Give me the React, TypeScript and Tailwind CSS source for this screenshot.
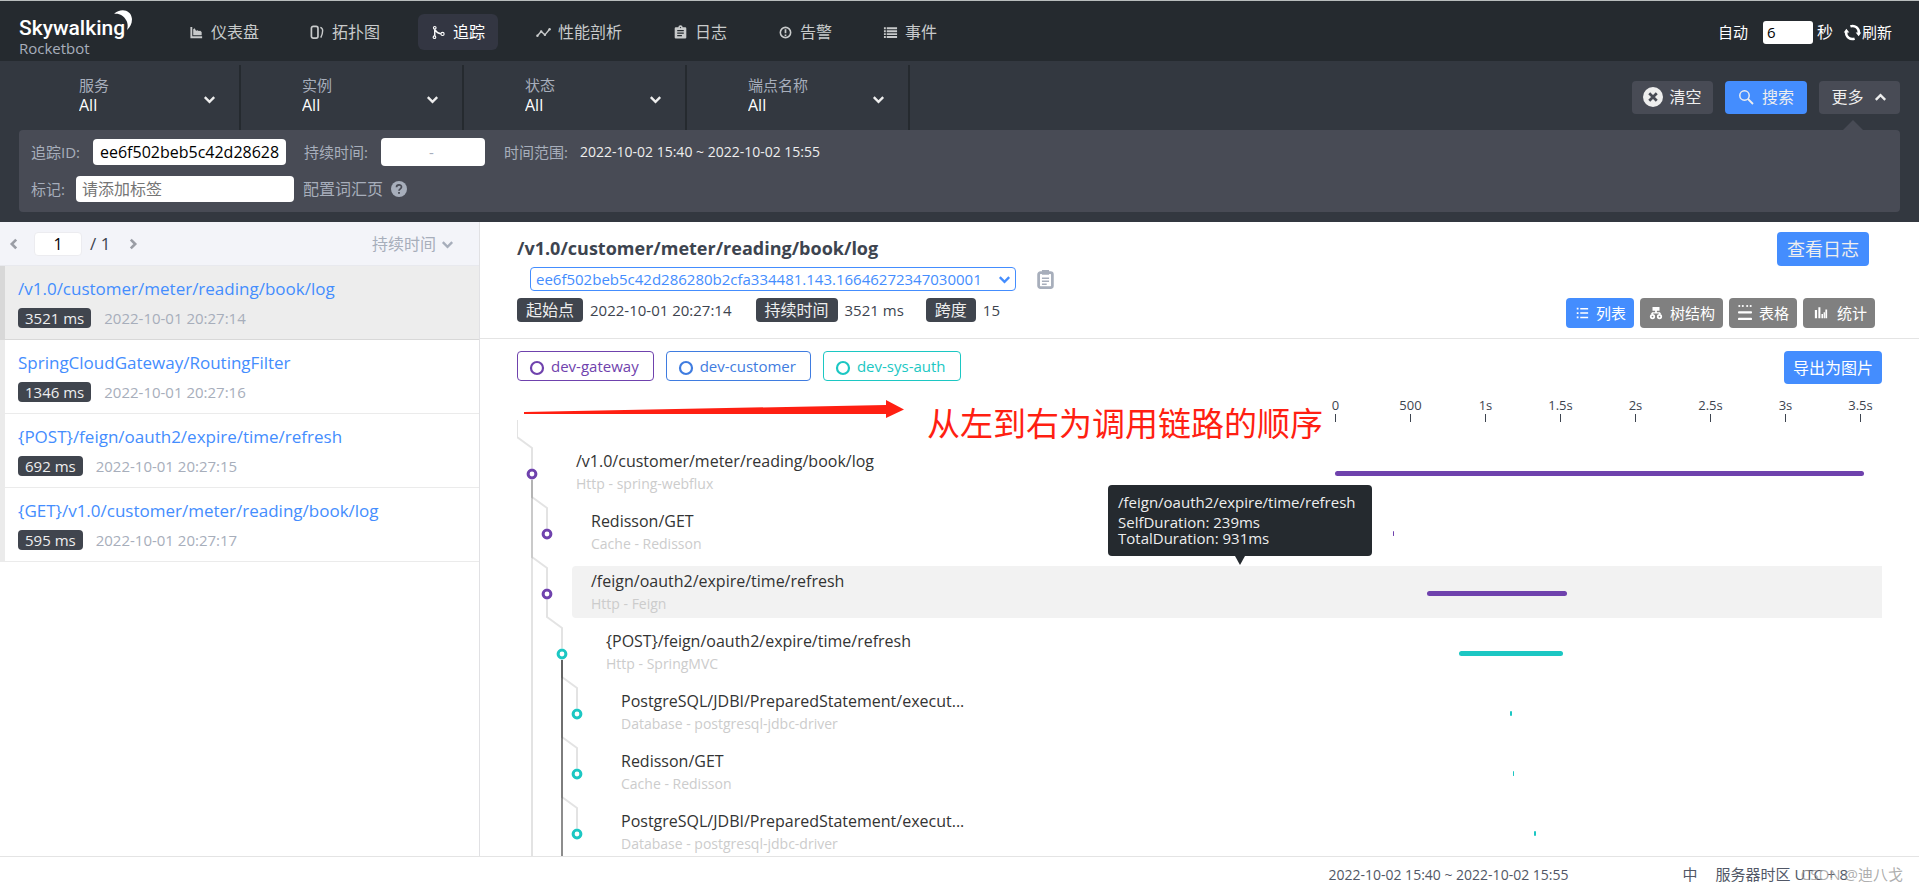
import React from "react";

type Span = {
  id: number;
  parent: number;
  depth: number;
  title: string;
  component: string;
  service: string;
  start: number;
  duration: number;
};

const TRACE_ID = "ee6f502beb5c42d286280b2cfa334481.143.16646272347030001";

// time covered by the full width of the bar track, in ms
const TRACK_MS = 3640;
const ROW_HEIGHT = 60;

const navItems = [
  { label: "仪表盘", icon: "dashboard" },
  { label: "拓扑图", icon: "topology" },
  { label: "追踪", icon: "trace", active: true },
  { label: "性能剖析", icon: "profile" },
  { label: "日志", icon: "log" },
  { label: "告警", icon: "alarm" },
  { label: "事件", icon: "event" },
];

const filters = ["服务", "实例", "状态", "端点名称"];

const traces = [
  { title: "/v1.0/customer/meter/reading/book/log", ms: 3521, time: "2022-10-01 20:27:14" },
  { title: "SpringCloudGateway/RoutingFilter", ms: 1346, time: "2022-10-01 20:27:16" },
  { title: "{POST}/feign/oauth2/expire/time/refresh", ms: 692, time: "2022-10-01 20:27:15" },
  { title: "{GET}/v1.0/customer/meter/reading/book/log", ms: 595, time: "2022-10-01 20:27:17" },
];

const services = [
  { name: "dev-gateway", className: "border-[#6f42ad] text-[#6f42ad]" },
  { name: "dev-customer", className: "border-[#3f7ce0] text-[#3f7ce0]" },
  { name: "dev-sys-auth", className: "border-[#1cc7c3] text-[#1cc7c3]" },
];

const views = [
  { label: "列表", icon: "list", iconWidth: "w-4", active: true },
  { label: "树结构", icon: "tree", iconWidth: "w-4" },
  { label: "表格", icon: "table", iconWidth: "w-4" },
  { label: "统计", icon: "statistics", iconWidth: "w-5" },
];

const ticks = ["0", "500", "1s", "1.5s", "2s", "2.5s", "3s", "3.5s"];

const colors: Record<string, string> = {
  gateway: "#6f42ad",
  auth: "#1cc7c3",
};

const spans: Span[] = [
  { id: 0, parent: -1, depth: 1, title: "/v1.0/customer/meter/reading/book/log", component: "Http - spring-webflux", service: "gateway", start: 0, duration: 3521 },
  { id: 1, parent: 0, depth: 2, title: "Redisson/GET", component: "Cache - Redisson", service: "gateway", start: 388, duration: 8 },
  { id: 2, parent: 0, depth: 2, title: "/feign/oauth2/expire/time/refresh", component: "Http - Feign", service: "gateway", start: 612, duration: 931 },
  { id: 3, parent: 2, depth: 3, title: "{POST}/feign/oauth2/expire/time/refresh", component: "Http - SpringMVC", service: "auth", start: 828, duration: 692 },
  { id: 4, parent: 3, depth: 4, title: "PostgreSQL/JDBI/PreparedStatement/execut...", component: "Database - postgresql-jdbc-driver", service: "auth", start: 1166, duration: 12 },
  { id: 5, parent: 3, depth: 4, title: "Redisson/GET", component: "Cache - Redisson", service: "auth", start: 1182, duration: 10 },
  { id: 6, parent: 3, depth: 4, title: "PostgreSQL/JDBI/PreparedStatement/execut...", component: "Database - postgresql-jdbc-driver", service: "auth", start: 1326, duration: 12 },
];

const Icon = ({ name, className = "" }: { name: string; className?: string }) => {
  const shapes: Record<string, React.ReactNode> = {
    dashboard: (
      <path d="M1.5 2h2v10H14v2H1.5zM4.5 4.5l1.5-1 1.5 2.5 1.5-.5 1.5 1 1.5-.5 1.5 1.5V11h-9z" fill="currentColor" />
    ),
    topology: (
      <g fill="none" stroke="currentColor" strokeWidth="1.8">
        <rect x="1.500" y="1.500" width="7" height="12.500" rx="2" />
        <path d="M11 2.500c1.800.6 2.500 1.500 2.500 3.300 0 3-.7 5.200-2 7.700" strokeWidth="1.500" />
      </g>
    ),
    trace: (
      <g fill="none" stroke="currentColor" strokeWidth="1.200">
        <path d="M4 4.500v7M4.500 5.500c1.500 2.500 3.500 3.500 6 3.800" strokeWidth="1.500" />
        <circle cx="4" cy="3" r="1.400" />
        <circle cx="3.700" cy="13" r="1.400" />
        <circle cx="12.300" cy="9.500" r="1.700" />
      </g>
    ),
    profile: (
      <g fill="none" stroke="currentColor" strokeWidth="1.500">
        <path d="M1.500 11.500l4-4.500 4 3.500 5-6" />
        <g fill="currentColor" stroke="none">
          <circle cx="1.500" cy="11.500" r="1.300" />
          <circle cx="5.500" cy="7" r="1.300" />
          <circle cx="9.500" cy="10.500" r="1.300" />
          <circle cx="14.500" cy="4.500" r="1.300" />
        </g>
      </g>
    ),
    log: (
      <path
        fill="currentColor"
        fillRule="evenodd"
        d="M13 2.500h-2.700a2.200 2.200 0 0 0-4.600 0H3A1.200 1.200 0 0 0 1.800 3.700v9.600A1.200 1.200 0 0 0 3 14.500h10a1.200 1.200 0 0 0 1.200-1.200V3.700A1.200 1.200 0 0 0 13 2.500zM8 2a.7.7 0 1 1 0 1.400A.7.7 0 0 1 8 2zm1.500 10h-5v-1.300h5zm2-2.700h-7V8h7zm0-2.600h-7V5.300h7z"
      />
    ),
    alarm: (
      <g>
        <circle cx="8" cy="8" r="5.500" fill="none" stroke="currentColor" strokeWidth="1.700" />
        <path d="M7.100 4.500h1.800v4.300H7.100zM7.100 10h1.800v1.600H7.100z" fill="currentColor" />
      </g>
    ),
    event: (
      <path
        fill="currentColor"
        d="M1 2.500h2v2H1zM4 2.500h11v2H4zM1 5.600h2v2H1zM4 5.600h11v2H4zM1 8.700h2v2H1zM4 8.700h11v2H4zM1 11.800h2v2H1zM4 11.800h11v2H4z"
      />
    ),
    list: (
      <path
        fill="currentColor"
        d="M2 2h2v2H2zM6 2.200h9v1.700H6zM2 7h2v2H2zM6 7.200h9v1.700H6zM2 12h2v2H2zM6 12.200h9v1.700H6z"
      />
    ),
    tree: (
      <g>
        <path d="M4 1h8v4.500H9V7h3.500L14 9.500h-2l-1-1H5l-1 1H2L3.500 7H7V5.500H4z" fill="currentColor" />
        <g fill="none" stroke="currentColor" strokeWidth="2">
          <circle cx="4" cy="12" r="2" />
          <circle cx="12" cy="12" r="2" />
        </g>
      </g>
    ),
    table: (
      <g fill="currentColor">
        <circle cx="1.500" cy="0" r="1.200" />
        <circle cx="5.500" cy="0" r="1.200" />
        <circle cx="10.500" cy="0" r="1.200" />
        <circle cx="14.500" cy="0" r="1.200" />
        <rect x="0" y="6" width="16" height="2.500" rx="1" />
        <rect x="0" y="13.500" width="16" height="2.500" rx="1" />
      </g>
    ),
    statistics: (
      <path fill="currentColor" d="M1 4.500h2.500V14H1zM5 1.500h2.300V14H5zM8.500 9h1.800v5H8.500zM11 7h1.500v7H11zM13 4h2v10h-2z" />
    ),
    clipboard: (
      <g fill="none" stroke="currentColor">
        <rect x="2.200" y="2.200" width="11.600" height="12.600" rx="1.500" strokeWidth="2.300" />
        <path d="M5 2h6" strokeWidth="4" />
        <path d="M5 7h6M5 9.500h6M5 12h4" strokeWidth="1.200" />
      </g>
    ),
    clear: (
      <g>
        <circle cx="8" cy="8" r="8" fill="currentColor" />
        <path d="M5 5l6 6M11 5l-6 6" stroke="#484b55" strokeWidth="2.200" />
      </g>
    ),
    search: (
      <g fill="none" stroke="currentColor" strokeWidth="1.500">
        <circle cx="6.500" cy="6.500" r="4.700" />
        <path d="M10 10l5 5" strokeWidth="1.800" />
      </g>
    ),
    refresh: (
      <g fill="none" stroke="currentColor" strokeWidth="2.300">
        <path d="M6 2.200A6 6 0 0 1 14 8.500M10 13.800A6 6 0 0 1 2 7.500" />
        <path d="M11 8h5.200L13.800 11.500zM-.2 8h5.200L2.200 4.500z" fill="currentColor" stroke="none" />
      </g>
    ),
    help: (
      <g>
        <circle cx="8" cy="8" r="8" fill="currentColor" />
        <path d="M5.500 6.200C5.500 3 10.500 3 10.500 6.100 10.500 7.900 8 7.900 8 9.800" fill="none" stroke="#484b55" strokeWidth="1.700" />
        <rect x="7.100" y="11" width="1.800" height="1.800" fill="#484b55" />
      </g>
    ),
    down: <path d="M3 5.500l5 5 5-5" fill="none" stroke="currentColor" strokeWidth="2.500" />,
    up: <path d="M3 10.500l5-5 5 5" fill="none" stroke="currentColor" strokeWidth="2.500" />,
    left: <path d="M10.500 3l-5 5 5 5" fill="none" stroke="currentColor" strokeWidth="3" />,
    right: <path d="M5.500 3l5 5-5 5" fill="none" stroke="currentColor" strokeWidth="3" />,
  };
  return (
    <svg viewBox="0 0 16 16" className={`shrink-0 overflow-visible ${className}`} aria-hidden="true">
      {shapes[name]}
    </svg>
  );
};

const Header = () => (
  <header className="flex h-[61px] shrink-0 items-center border-t border-[#b9bdbd] bg-[#252a2f] pl-[19px] pr-[27px] pt-0.5">
    <div className="relative w-[157px] pt-2">
      <div className="font-['Roboto',sans-serif] text-[21px] font-medium leading-6 text-white">Skywalking</div>
      <div className="text-[15px] leading-4 text-[#a7aebb]">Rocketbot</div>
      <svg viewBox="0 0 18 20" className="absolute left-[95px] top-0.5 h-5 w-[18px]" aria-hidden="true">
        <path d="M0 4C6-2 17-1 18 9c0 5-2 8-5 11 1-3 1-7-1-10C10 6 5 3 0 4z" fill="#fff" />
      </svg>
    </div>
    <nav className="flex gap-[25px]">
      {navItems.map((item) => (
        <a
          key={item.label}
          href="#"
          className={`flex h-9 items-center gap-[7px] rounded-md px-[13px] text-base ${
            item.active ? "bg-[#333642] text-white" : "text-[#c8cacb]"
          }`}
        >
          <Icon name={item.icon} className="h-[15px] w-[15px]" />
          {item.label}
        </a>
      ))}
    </nav>
    <div className="ml-auto flex items-center text-[15px] text-white">
      <label htmlFor="interval" className="mr-[15px]">自动</label>
      <input
        id="interval"
        defaultValue="6"
        className="mr-1 h-[23px] w-[50px] rounded-[3px] bg-white px-1 text-[15px] text-black"
      />
      <span className="mr-[11px] text-base">秒</span>
      <button className="flex items-center gap-px">
        <Icon name="refresh" className="h-[17px] w-[17px]" />
        刷新
      </button>
    </div>
  </header>
);

const FilterBar = () => (
  <section className="shrink-0 bg-[#333840] px-[19px] pb-[10px] pt-1">
    <div className="flex h-[65px] items-center">
      <div className="-ml-px flex self-stretch">
        {filters.map((label) => (
          <div key={label} className="relative flex w-[223px] flex-col justify-center border-r-2 border-[#252a2f] pb-[5px] pl-[61px]">
            <label htmlFor={label} className="text-[15px] leading-5 text-[#a7aebb]">{label}</label>
            <select id={label} className="w-[148px] appearance-none bg-transparent text-base leading-5 text-white">
              <option>All</option>
            </select>
            <Icon name="down" className="pointer-events-none absolute right-[22px] top-[27px] h-[15px] w-[15px] text-[#eee]" />
          </div>
        ))}
      </div>
      <div className="ml-auto flex gap-3 pb-px text-base text-[#eee]">
        <button className="flex h-[33px] w-[81px] items-center justify-center gap-1.5 rounded bg-[#484b55]">
          <Icon name="clear" className="h-5 w-5" />
          清空
        </button>
        <button className="flex h-[33px] w-[82px] items-center justify-center gap-2 rounded bg-[#448dfe]">
          <Icon name="search" className="h-4 w-4" />
          搜索
        </button>
        <button className="flex h-[33px] w-[81px] items-center justify-center gap-[9px] rounded bg-[#484b55]">
          更多
          <Icon name="up" className="h-[15px] w-[15px]" />
        </button>
      </div>
    </div>
    <div className="relative flex h-[82px] flex-col gap-[10px] rounded bg-[#484b55] px-3 pt-2 text-[15px] text-[#a7aebb]">
      <svg viewBox="0 0 20 10" className="absolute -top-[10px] right-[37px] h-[10px] w-5" aria-hidden="true">
        <path d="M0 10L10 0l10 10z" fill="#484b55" />
      </svg>
      <div className="flex h-7 items-center">
        <label htmlFor="trace-id" className="w-[62px]">追踪ID:</label>
        <input
          id="trace-id"
          defaultValue={TRACE_ID}
          className="mr-[18px] h-[26px] w-[193px] rounded bg-white px-[7px] text-base text-black"
        />
        <label htmlFor="min-duration" className="w-[77px]">持续时间:</label>
        <div className="mr-[19px] flex h-7 w-[104px] items-center rounded bg-white">
          <input id="min-duration" className="w-12 min-w-0 bg-transparent text-center text-black" />
          <span>-</span>
          <input aria-label="最大持续时间" className="w-12 min-w-0 bg-transparent text-center text-black" />
        </div>
        <span className="w-[76px]">时间范围:</span>
        <span className="text-sm text-[#eee]">2022-10-02 15:40 ~ 2022-10-02 15:55</span>
      </div>
      <div className="flex h-[26px] items-center">
        <label htmlFor="tags" className="w-[45px]">标记:</label>
        <input
          id="tags"
          placeholder="请添加标签"
          className="mr-[9px] h-[26px] w-[218px] rounded bg-white px-1.5 text-base text-black placeholder:text-[#757575]"
        />
        <a href="#" className="flex items-center gap-2 text-base">
          配置词汇页
          <Icon name="help" className="h-4 w-4" />
        </a>
      </div>
    </div>
  </section>
);

const TraceList = () => (
  <aside className="flex w-[480px] shrink-0 flex-col border-r border-[#e1e1e4]">
    <div className="flex h-11 shrink-0 items-center border-b border-[#e8e9ee] bg-[#f3f4f9] pl-[7px] pr-6 text-base text-[#3d444f]">
      <button aria-label="上一页">
        <Icon name="left" className="h-3.5 w-3.5 text-[#9a9da5]" />
      </button>
      <input
        aria-label="页码"
        defaultValue="1"
        className="ml-[13px] mr-2 h-6 w-12 rounded border border-[#ececf0] bg-white text-center text-black"
      />
      <span className="text-[17px]">/ 1</span>
      <button aria-label="下一页" className="ml-4">
        <Icon name="right" className="h-3.5 w-3.5 text-[#9a9da5]" />
      </button>
      <div className="relative ml-auto text-[#a7aebb]">
        <select aria-label="排序" className="w-[83px] appearance-none bg-transparent">
          <option>持续时间</option>
        </select>
        <Icon name="down" className="pointer-events-none absolute right-0 top-[5px] h-[15px] w-[15px]" />
      </div>
    </div>
    <ul>
      {traces.map((trace, i) => (
        <li
          key={trace.title}
          className={`h-[74px] border-b border-l-[5px] pl-[13px] pt-[11px] ${
            i === 0 ? "border-b-[#d8d8d8] border-l-[#d8d8d8] bg-[#ededed]" : "border-b-[#ebebeb] border-l-[#ebebeb]"
          }`}
        >
          <a href="#" className="block text-[17px] leading-6 text-[#448dfe]">{trace.title}</a>
          <div className="mt-[7px] flex items-center gap-[13px] text-[15px] leading-5">
            <span className="rounded bg-[#40454e] px-[7px] text-[#eee]">{trace.ms} ms</span>
            <span className="text-[#a7aebb]">{trace.time}</span>
          </div>
        </li>
      ))}
    </ul>
  </aside>
);

const DetailHeader = () => (
  <div className="flex h-[117px] shrink-0 justify-between border-b border-[#e4e4e4] pl-[37px] pr-[44px] text-[#3d444f]">
    <div className="pt-[14px]">
      <h1 className="text-lg font-bold leading-6">/v1.0/customer/meter/reading/book/log</h1>
      <div className="ml-[13px] mt-[7px] flex items-center gap-5">
        <div className="relative text-[#448dfe]">
          <select aria-label="追踪ID" className="h-6 w-[486px] appearance-none rounded border border-[#448dfe] bg-transparent px-[5px] text-[15px] leading-5">
            <option>{TRACE_ID}</option>
          </select>
          <Icon name="down" className="pointer-events-none absolute right-1 top-[5px] h-[15px] w-[15px]" />
        </div>
        <button aria-label="复制" className="text-[#a7aebb]">
          <Icon name="clipboard" className="h-[19px] w-[19px]" />
        </button>
      </div>
      <dl className="mt-[7px] flex items-center text-[15px] leading-6">
        <dt className="rounded bg-[#40454e] px-[9px] text-base leading-6 text-[#eee]">起始点</dt>
        <dd className="ml-[7px] mr-6">2022-10-01 20:27:14</dd>
        <dt className="rounded bg-[#40454e] px-[9px] text-base leading-6 text-[#eee]">持续时间</dt>
        <dd className="ml-[7px] mr-[22px]">3521 ms</dd>
        <dt className="rounded bg-[#40454e] px-[9px] text-base leading-6 text-[#eee]">跨度</dt>
        <dd className="ml-[7px]">15</dd>
      </dl>
    </div>
    <div className="flex flex-col items-end pt-[10px]">
      <button className="mr-1.5 h-[34px] w-[92px] rounded bg-[#448dfe] text-lg leading-6 text-[#eee]">查看日志</button>
      <div className="mt-8 flex gap-1.5 text-[15px] text-white">
        {views.map((view) => (
          <button
            key={view.label}
            className={`flex h-[30px] items-center gap-1.5 rounded px-2 ${view.active ? "bg-[#448dfe]" : "bg-[#808080]"}`}
          >
            <Icon name={view.icon} className={`h-3.5 ${view.iconWidth}`} />
            {view.label}
          </button>
        ))}
      </div>
    </div>
  </div>
);

const nodeX = (depth: number) => depth * 15;
const nodeY = (index: number) => 54 + index * ROW_HEIGHT;

const linkPath = (parent: Span, childDepth: number, childIndex: number) =>
  `M${nodeX(parent.depth)} ${nodeY(parent.id) + 6}V${nodeY(childIndex) - 37}L${nodeX(childDepth)} ${
    nodeY(childIndex) - 26
  }V${nodeY(childIndex) - 6}`;

const SpanTree = () => {
  // spans further down the list, only their connectors reach into view
  const rest = [7, 8, 9, 10, 11];
  return (
    <svg className="absolute -top-[22px] left-0 h-[460px] w-20" aria-hidden="true">
      <g fill="none" stroke="#000" strokeOpacity="0.11" strokeWidth="2">
        <path d="M0 0V17L15 28V48" />
        {spans.slice(1).map((span) => (
          <path key={span.id} d={linkPath(spans[span.parent], span.depth, span.id)} />
        ))}
        {rest.map((index) => (
          <path key={index} d={linkPath(spans[3], 4, index)} />
        ))}
        <path d={linkPath(spans[0], 2, 12)} />
      </g>
      {spans.map((span) => (
        <circle
          key={span.id}
          cx={nodeX(span.depth)}
          cy={nodeY(span.id)}
          r="3.900"
          fill="#fff"
          stroke={colors[span.service]}
          strokeWidth="3"
        />
      ))}
    </svg>
  );
};

const Tooltip = () => (
  <div className="absolute bottom-[66px] left-[591px] z-10 w-[264px] rounded bg-[#252a2f] px-[10px] pb-[10px] pt-[7px] text-[15px] leading-4 text-[#eee]">
    <p className="mb-0.5 leading-5">/feign/oauth2/expire/time/refresh</p>
    <p>SelfDuration: 239ms</p>
    <p>TotalDuration: 931ms</p>
    <svg viewBox="0 0 10 9" className="absolute left-[127px] top-full h-[9px] w-[10px]" aria-hidden="true">
      <path d="M0 0h10L5 9z" fill="#252a2f" />
    </svg>
  </div>
);

const TraceChart = () => (
  <div className="relative min-h-0 flex-1 overflow-hidden px-[37px] pt-3">
    <div className="flex h-[33px] items-start gap-3">
      {services.map((service) => (
        <span
          key={service.name}
          className={`flex h-[30px] items-center gap-1.5 rounded border pl-[11px] pr-[14px] text-[15px] ${service.className}`}
        >
          <svg viewBox="0 0 16 16" className="mt-1 h-4 w-4" aria-hidden="true">
            <circle cx="8" cy="8" r="6" fill="none" stroke="currentColor" strokeWidth="2.200" />
          </svg>
          {service.name}
        </span>
      ))}
      <button className="ml-auto h-[33px] rounded bg-[#448dfe] px-[9px] text-base text-white">导出为图片</button>
    </div>

    <div className="mt-[13px] flex justify-end text-[13px] leading-4 text-[#3d444f]">
      <div className="-ml-[37px] mr-[-16px] flex">
        {ticks.map((tick) => (
          <div key={tick} className="flex w-[75px] flex-col items-center">
            {tick}
            <span className="mt-px h-2 w-px bg-[#3d444f]" />
          </div>
        ))}
      </div>
    </div>

    <div className="relative mt-5">
      <SpanTree />
      {spans.map((span, i) => (
        <div key={span.id} className="relative h-[60px] py-1 pl-[55px]">
          <div className={`flex h-[52px] items-center rounded-l ${i === 2 ? "bg-[#f2f2f2]" : ""}`}>
            <div className="min-w-0 flex-1 pl-1 pt-0.5">
              <div style={{ paddingLeft: (span.depth - 1) * 15 }}>
                <div className="text-base leading-[22px] text-[#333]">{span.title}</div>
                <div className="text-sm leading-6 text-[#ccc]">{span.component}</div>
              </div>
            </div>
            <div className="w-[547px] shrink-0">
              <div
                className="mt-[3px] h-[5px] min-w-px rounded-sm"
                style={{
                  marginLeft: `${(span.start / TRACK_MS) * 100}%`,
                  width: `${(span.duration / TRACK_MS) * 100}%`,
                  backgroundColor: colors[span.service],
                }}
              />
            </div>
          </div>
          {i === 2 && <Tooltip />}
        </div>
      ))}
    </div>

    <svg viewBox="0 0 380 18" className="absolute left-11 top-[61px] h-[18px] w-[380px]" aria-hidden="true">
      <path d="M0 12L362 5V0L380 9.500 362 18V14L0 14z" fill="#ff1f12" />
    </svg>
    <div className="absolute left-[447px] top-[65px] text-[33px] leading-10 text-[#ff1f12]">从左到右为调用链路的顺序</div>
  </div>
);

const Footer = () => (
  <footer className="relative flex h-9 shrink-0 items-center justify-end border-t border-[#e4e4e4] pr-[71px] text-[15px] text-[#515766]">
    <span className="mr-[114px] text-sm">2022-10-02 15:40 ~ 2022-10-02 15:55</span>
    <button className="mr-[18px]">中</button>
    <span>服务器时区 UTC + 8</span>
    <span className="absolute right-4 text-[15px] text-[#999]/80">CSDN @迪八戈</span>
  </footer>
);

const App = () => {
  return (
    <div className="flex h-screen flex-col overflow-hidden bg-white font-['Open_Sans','Noto_Sans_CJK_SC',sans-serif]">
      <Header />
      <FilterBar />
      <main className="flex min-h-0 flex-1">
        <TraceList />
        <section className="flex min-w-0 flex-1 flex-col">
          <DetailHeader />
          <TraceChart />
        </section>
      </main>
      <Footer />
    </div>
  );
};

export default App;
